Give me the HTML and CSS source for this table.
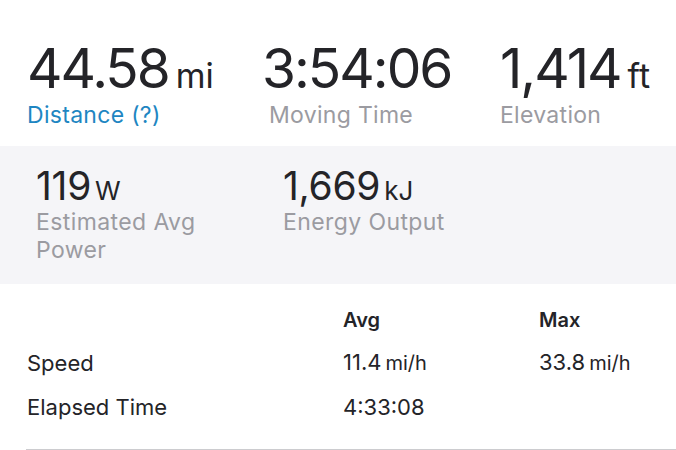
FILE: index.html
```html
<!DOCTYPE html>
<html>
<head>
<meta charset="utf-8">
<link rel="stylesheet" href="styles.css">
</head>
<body>
<div class="page">
  <section class="primary">
    <div class="stat s1">
      <div class="value">44.58<abbr class="unit">mi</abbr></div>
      <div class="label link">Distance (?)</div>
    </div>
    <div class="stat s2">
      <div class="value">3:54:06</div>
      <div class="label">Moving Time</div>
    </div>
    <div class="stat s3">
      <div class="value">1,414<abbr class="unit">ft</abbr></div>
      <div class="label">Elevation</div>
    </div>
  </section>
  <section class="secondary">
    <div class="stat2">
      <div class="value2">119<abbr class="unit2">W</abbr></div>
      <div class="label2">Estimated Avg<br>Power</div>
    </div>
    <div class="stat2">
      <div class="value2">1,669<abbr class="unit2">kJ</abbr></div>
      <div class="label2">Energy Output</div>
    </div>
  </section>
  <table class="more">
    <thead>
      <tr><th class="c1"></th><th class="c2">Avg</th><th class="c3">Max</th></tr>
    </thead>
    <tbody>
      <tr><td>Speed</td><td>11.4<abbr class="u">mi/h</abbr></td><td>33.8<abbr class="u">mi/h</abbr></td></tr>
      <tr><td>Elapsed Time</td><td>4:33:08</td><td></td></tr>
    </tbody>
  </table>
  <div class="rule"></div>
</div>
</body>
</html>
```
FILE: styles.css
```css
html, body { margin: 0; padding: 0; background: #fff; }
body { font-family: Inter, "Noto Sans", sans-serif; color: #242428; width: 676px; overflow: hidden; }
abbr { text-decoration: none; }
.primary { display: flex; padding: 38px 0 18px 27px; }
.stat { flex: none; }
.s1 { width: 235px; }
.s2 { width: 238px; }
.s2 .label { padding-left: 7px; }
.value { font-size: 55px; line-height: 60px; letter-spacing: -2px; font-weight: 400; white-space: nowrap; }
.unit { font-size: 34px; line-height: 0; letter-spacing: 0; margin-left: 7px; }
.label { font-size: 23px; line-height: 26px; letter-spacing: 0.3px; color: #9b9ba1; margin-top: 4px; }
.label.link { color: #1e86c2; }
.secondary { background: #f5f5f8; display: flex; padding: 19px 0 20px 36px; }
.stat2 { width: 247px; flex: none; }
.value2 { font-size: 39px; line-height: 42px; letter-spacing: -0.3px; white-space: nowrap; }
.unit2 { font-size: 26px; line-height: 0; letter-spacing: 0; margin-left: 4px; }
.label2 { font-size: 23px; line-height: 28px; letter-spacing: 0.4px; color: #9b9ba1; margin-top: 1px; }
.more { border-collapse: collapse; margin: 19px 0 0 27px; font-size: 22px; }
.more th { text-align: left; font-weight: 600; font-size: 20px; height: 37px; line-height: 34px; padding: 0; vertical-align: top; }
.more td { height: 44px; line-height: 44px; padding: 0; white-space: nowrap; }
.c1 { width: 316px; }
.c2 { width: 196px; }
.c3 { width: 130px; }
.u { font-size: 20px; margin-left: 4px; }
.rule { margin: 20px 0 0 26px; height: 3px; background: #cccccf; }
```
